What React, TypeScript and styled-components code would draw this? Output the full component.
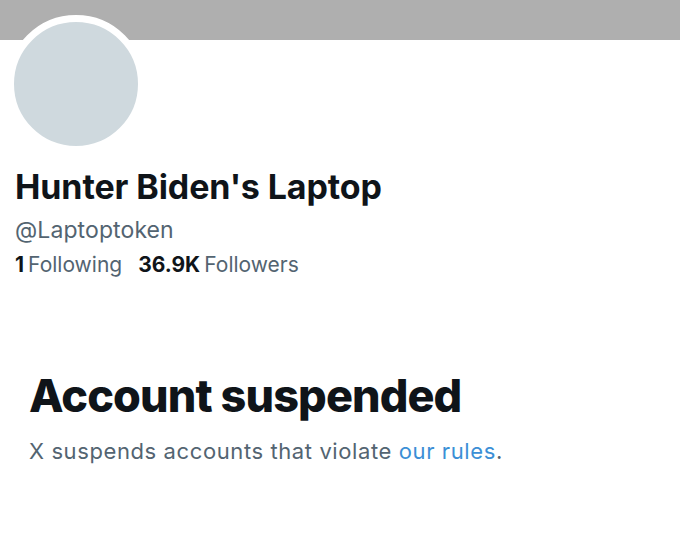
import React from "react";
import styled, { createGlobalStyle } from "styled-components";

const Global = createGlobalStyle`
  html, body { margin: 0; padding: 0; background: #ffffff; }
  body { font-family: Inter, "Noto Sans", "Liberation Sans", sans-serif; color: #0f1419; }
`;

const Page = styled.div`
  width: 680px;
  height: 538px;
  overflow: hidden;
  background: #ffffff;
  display: flex;
  flex-direction: column;
`;

const Banner = styled.div`
  height: 40px;
  background: #afafaf;
  flex-shrink: 0;
`;

const Header = styled.div`
  padding: 0 0 0 7px;
  margin-top: -25px;
`;

const Avatar = styled.div`
  width: 124px;
  height: 124px;
  border-radius: 50%;
  background: #cfd9de;
  border: 7px solid #ffffff;
`;

const Info = styled.div`
  padding-left: 8px;
  display: flex;
  flex-direction: column;
`;

const Name = styled.h1`
  margin: 14px 0 0;
  font-size: 34px;
  font-weight: 700;
  letter-spacing: -0.1px;
  line-height: 40px;
  color: #0f1419;
`;

const Handle = styled.div`
  margin-top: 8px;
  font-size: 23px;
  line-height: 30px;
  letter-spacing: 0.1px;
  color: #536471;
`;

const Stats = styled.div`
  margin-top: 7px;
  display: flex;
  gap: 16px;
  font-size: 21px;
  line-height: 26px;
`;

const Stat = styled.span`
  color: #536471;
`;

const Count = styled.strong`
  color: #0f1419;
  font-weight: 700;
  margin-right: 4px;
`;

const Notice = styled.div`
  padding: 92px 0 0 29px;
  display: flex;
  flex-direction: column;
`;

const Title = styled.h2`
  margin: 0;
  font-size: 45px;
  font-weight: 800;
  line-height: 52px;
  letter-spacing: -0.9px;
  color: #0f1419;
`;

const Body = styled.p`
  margin: 15px 0 0;
  font-size: 22px;
  line-height: 28px;
  letter-spacing: 0.6px;
  color: #536471;
`;

const Link = styled.a`
  color: #3b8fd6;
  text-decoration: none;
`;

export default function App() {
  return (
    <>
      <Global />
      <Page>
        <Banner />
        <Header>
          <Avatar />
          <Info>
            <Name>Hunter Biden's Laptop</Name>
            <Handle>@Laptoptoken</Handle>
            <Stats>
              <Stat>
                <Count>1</Count>Following
              </Stat>
              <Stat>
                <Count>36.9K</Count>Followers
              </Stat>
            </Stats>
          </Info>
        </Header>
        <Notice>
          <Title>Account suspended</Title>
          <Body>
            X suspends accounts that violate <Link href="#">our rules</Link>.
          </Body>
        </Notice>
      </Page>
    </>
  );
}
